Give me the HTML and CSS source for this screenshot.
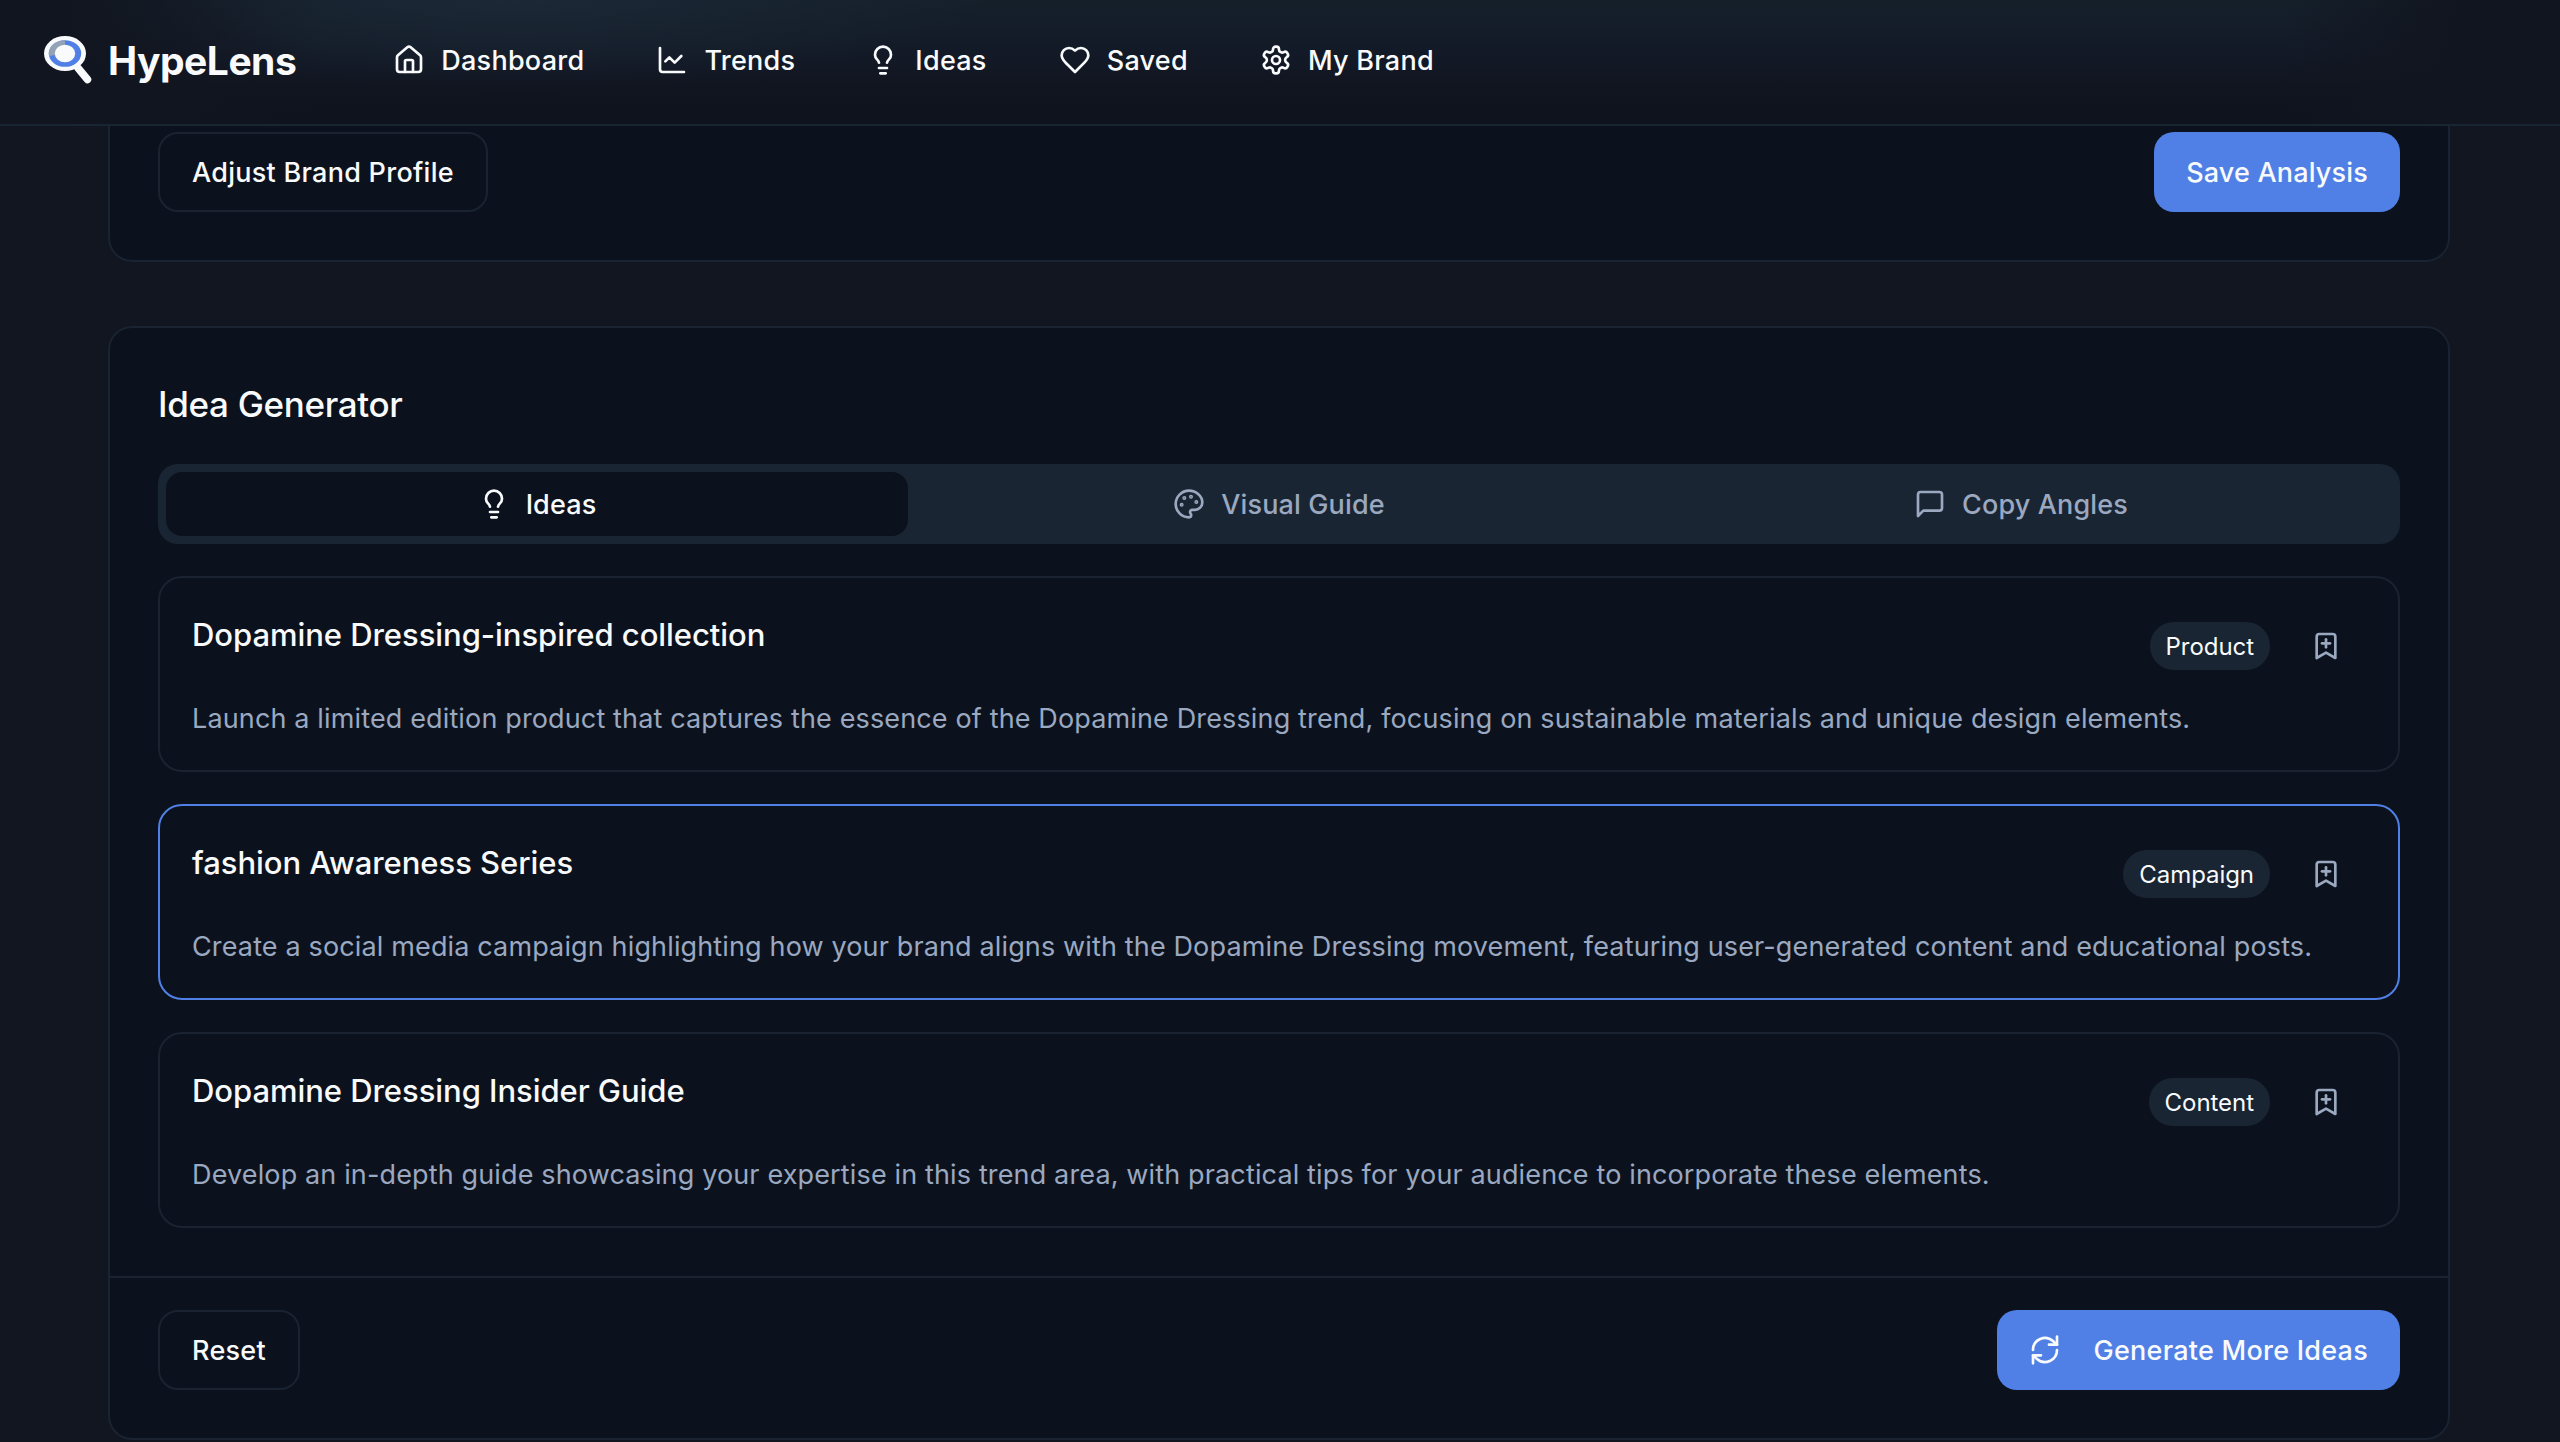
FILE: index.html
```html
<!DOCTYPE html>
<html lang="en">
<head>
    <meta charset="utf-8">
    <title>HypeLens</title>
    <meta name="viewport" content="width=device-width, initial-scale=1">
    <link rel="stylesheet" href="styles.css">
</head>

<body>
    <!-- icons -->
    <svg width="0" height="0" class="sprite">
        <symbol id="bulb" viewBox="0 0 24 24"><path d="M15 14c.2-1 .7-1.7 1.5-2.5 1-.9 1.5-2.2 1.5-3.5A6 6 0 0 0 6 8c0 1 .2 2.2 1.5 3.5.7.7 1.3 1.5 1.5 2.5"/><path d="M9 18h6"/><path d="M10 22h4"/></symbol>
        <symbol id="bookmark" viewBox="0 0 24 24"><path d="m19 21-7-4-7 4V5a2 2 0 0 1 2-2h10a2 2 0 0 1 2 2v16Z"/><path d="M12 7v6"/><path d="M15 10H9"/></symbol>
    </svg>

    <header class="navbar">
        <a class="logo" href="#">
            <svg class="logo-mark" viewBox="0 0 48 48">
                <path d="M34 32l9.500 11.500" stroke="#f8fafc" stroke-width="7.500" stroke-linecap="round"/>
                <ellipse cx="21" cy="17.500" rx="21" ry="17.500" fill="#f8fafc"/>
                <ellipse cx="21" cy="17.500" rx="16.200" ry="13.300" fill="#5080e6"/>
                <path d="M21 4.200A16.200 13.300 0 0 0 5 20L21 17.500z" fill="#94a3b3"/>
                <ellipse cx="21" cy="17.500" rx="10.200" ry="8.800" fill="#f8fafc"/>
            </svg>
            <span>HypeLens</span>
        </a>
        <nav>
            <a href="#"><svg class="icon" viewBox="0 0 24 24"><path d="M15 21v-8a1 1 0 0 0-1-1h-4a1 1 0 0 0-1 1v8"/><path d="M3 10a2 2 0 0 1 .709-1.528l7-5.999a2 2 0 0 1 2.582 0l7 5.999A2 2 0 0 1 21 10v9a2 2 0 0 1-2 2H5a2 2 0 0 1-2-2z"/></svg>Dashboard</a>
            <a href="#"><svg class="icon" viewBox="0 0 24 24"><path d="M3 3v16a2 2 0 0 0 2 2h16"/><path d="m19 9-5 5-4-4-3 3"/></svg>Trends</a>
            <a href="#"><svg class="icon"><use href="#bulb"/></svg>Ideas</a>
            <a href="#"><svg class="icon" viewBox="0 0 24 24"><path d="M19 14c1.490-1.460 3-3.210 3-5.500A5.500 5.500 0 0 0 16.500 3c-1.760 0-3 .5-4.500 2-1.500-1.500-2.740-2-4.500-2A5.500 5.500 0 0 0 2 8.500c0 2.300 1.500 4.050 3 5.500l7 7Z"/></svg>Saved</a>
            <a href="#"><svg class="icon" viewBox="0 0 24 24"><path d="M12.220 2h-.44a2 2 0 0 0-2 2v.18a2 2 0 0 1-1 1.730l-.43.25a2 2 0 0 1-2 0l-.15-.08a2 2 0 0 0-2.730.73l-.22.38a2 2 0 0 0 .73 2.730l.15.1a2 2 0 0 1 1 1.720v.51a2 2 0 0 1-1 1.740l-.15.09a2 2 0 0 0-.73 2.730l.22.38a2 2 0 0 0 2.730.73l.15-.08a2 2 0 0 1 2 0l.43.25a2 2 0 0 1 1 1.730V20a2 2 0 0 0 2 2h.44a2 2 0 0 0 2-2v-.18a2 2 0 0 1 1-1.730l.43-.25a2 2 0 0 1 2 0l.15.08a2 2 0 0 0 2.730-.73l.22-.39a2 2 0 0 0-.73-2.730l-.15-.08a2 2 0 0 1-1-1.740v-.5a2 2 0 0 1 1-1.740l.15-.09a2 2 0 0 0 .73-2.730l-.22-.38a2 2 0 0 0-2.730-.73l-.15.08a2 2 0 0 1-2 0l-.43-.25a2 2 0 0 1-1-1.730V4a2 2 0 0 0-2-2z"/><circle cx="12" cy="12" r="3"/></svg>My Brand</a>
        </nav>
    </header>

    <main>
        <section class="card analysis">
            <div class="card-footer">
                <button class="btn">Adjust Brand Profile</button>
                <button class="btn primary">Save Analysis</button>
            </div>
        </section>

        <section class="card generator">
            <h2>Idea Generator</h2>

            <div class="tabs">
                <button class="tab active"><svg class="icon"><use href="#bulb"/></svg>Ideas</button>
                <button class="tab"><svg class="icon" viewBox="0 0 24 24"><circle class="dot" cx="13.500" cy="6.500" r=".5"/><circle class="dot" cx="17.500" cy="10.500" r=".5"/><circle class="dot" cx="8.500" cy="7.500" r=".5"/><circle class="dot" cx="6.500" cy="12.500" r=".5"/><path d="M12 2C6.500 2 2 6.500 2 12s4.500 10 10 10c.926 0 1.648-.746 1.648-1.688 0-.437-.18-.835-.437-1.125-.29-.289-.438-.652-.438-1.125a1.640 1.640 0 0 1 1.668-1.668h1.996c3.051 0 5.555-2.503 5.555-5.554C21.965 6.012 17.461 2 12 2z"/></svg>Visual Guide</button>
                <button class="tab"><svg class="icon" viewBox="0 0 24 24"><path d="M21 15a2 2 0 0 1-2 2H7l-4 4V5a2 2 0 0 1 2-2h14a2 2 0 0 1 2 2z"/></svg>Copy Angles</button>
            </div>

            <div class="ideas">
                <article class="idea">
                    <div class="idea-head">
                        <h3>Dopamine Dressing-inspired collection</h3>
                        <span class="badge">Product</span>
                        <button class="save"><svg class="icon"><use href="#bookmark"/></svg></button>
                    </div>
                    <p>Launch a limited edition product that captures the essence of the Dopamine Dressing trend, focusing on sustainable materials and unique design elements.</p>
                </article>
                <article class="idea selected">
                    <div class="idea-head">
                        <h3>fashion Awareness Series</h3>
                        <span class="badge">Campaign</span>
                        <button class="save"><svg class="icon"><use href="#bookmark"/></svg></button>
                    </div>
                    <p>Create a social media campaign highlighting how your brand aligns with the Dopamine Dressing movement, featuring user-generated content and educational posts.</p>
                </article>
                <article class="idea">
                    <div class="idea-head">
                        <h3>Dopamine Dressing Insider Guide</h3>
                        <span class="badge">Content</span>
                        <button class="save"><svg class="icon"><use href="#bookmark"/></svg></button>
                    </div>
                    <p>Develop an in-depth guide showcasing your expertise in this trend area, with practical tips for your audience to incorporate these elements.</p>
                </article>
            </div>

            <div class="card-footer bordered">
                <button class="btn">Reset</button>
                <button class="btn primary with-icon"><svg class="icon" viewBox="0 0 24 24"><path d="M21 2v6h-6"/><path d="M3 12a9 9 0 0 1 15-6.700L21 8"/><path d="M3 22v-6h6"/><path d="M21 12a9 9 0 0 1-15 6.700L3 16"/></svg>Generate More Ideas</button>
            </div>
        </section>
    </main>
</body>
</html>
```

FILE: styles.css
```css
* {
    box-sizing: border-box;
}

body {
    margin: 0;
    height: 1442px;
    overflow: hidden;
    background: #121620;
    color: #f8fafc;
    font-family: Inter, sans-serif;
    font-size: 27px;
    line-height: 40px;
    letter-spacing: 0.14px;
}

h2, h3, p {
    margin: 0;
}

button {
    font: inherit;
    letter-spacing: inherit;
    color: inherit;
    background: none;
    border: 0;
    padding: 0;
}

a {
    color: inherit;
    text-decoration: none;
}

.sprite {
    position: absolute;
}

.icon {
    width: 32px;
    height: 32px;
    flex: none;
    fill: none;
    stroke: currentColor;
    stroke-width: 2;
    stroke-linecap: round;
    stroke-linejoin: round;
}

.dot {
    fill: currentColor;
}

/* top bar */
.navbar {
    height: 126px;
    padding: 0 44px 4px;
    display: flex;
    align-items: center;
    border-bottom: 2px solid #1a2533;
    background:
        linear-gradient(90deg, #11151f 60px, rgba(17, 21, 31, 0) 320px, rgba(17, 21, 31, 0) 2280px, #11151f 2460px),
        radial-gradient(ellipse 460px 90px at 520px 0, rgba(30, 43, 58, .7), rgba(30, 43, 58, 0)),
        linear-gradient(#15202b, #131a27 40%, #10141f 75%, #0f131d);
}

.logo {
    display: flex;
    align-items: center;
    gap: 16px;
    font-size: 39px;
    font-weight: 700;
    letter-spacing: -0.5px;
}

.logo span {
    padding-top: 2px;
}

.logo-mark {
    width: 48px;
    height: 48px;
}

nav {
    display: flex;
    gap: 72px;
    margin-left: 97px;
    font-weight: 500;
    letter-spacing: 0.26px;
}

nav a {
    display: flex;
    align-items: center;
    gap: 16px;
    padding-top: 2px;
}

nav .icon, .tab .icon, .btn .icon {
    margin-top: -2px;
}

/* cards */
.card {
    width: 2342px;
    margin-left: 108px;
    background: #0c121d;
    border: 2px solid #192331;
    border-radius: 24px;
}

.analysis {
    border-top: 0;
    border-radius: 0 0 24px 24px;
    padding-top: 6px;
    margin-bottom: 64px;
}

.card-footer {
    display: flex;
    justify-content: space-between;
    padding: 0 48px 48px;
}

.card-footer.bordered {
    border-top: 2px solid #192331;
    padding-top: 32px;
}

.btn {
    height: 80px;
    padding: 2px 32px 0;
    border: 2px solid #192331;
    border-radius: 20px;
    font-weight: 500;
    letter-spacing: 0.27px;
}

.btn.primary {
    background: #5080e6;
    border: 0;
    letter-spacing: 0.18px;
}

.btn.with-icon {
    display: flex;
    align-items: center;
    gap: 32px;
    letter-spacing: 0.25px;
}

.generator h2 {
    padding: 52px 48px 0;
    font-size: 35px;
    line-height: 48px;
    font-weight: 500;
    letter-spacing: -0.33px;
}

/* tabs */
.tabs {
    display: grid;
    grid-template-columns: repeat(3, 1fr);
    margin: 36px 48px 32px;
    padding: 8px;
    height: 80px;
    background: #1a2533;
    border-radius: 20px;
    color: #9aa8c0;
}

.tab {
    display: flex;
    align-items: center;
    justify-content: center;
    gap: 16px;
    padding-top: 2px;
    border-radius: 16px;
    font-weight: 500;
}

.tab.active {
    background: #0c121d;
    color: #f8fafc;
}

/* idea list */
.ideas {
    display: grid;
    gap: 32px;
    padding: 0 48px 48px;
}

.idea {
    height: 196px;
    min-width: 0;
    padding: 28px 32px;
    border: 2px solid #192331;
    border-radius: 24px;
}

.idea.selected {
    border-color: #5080e6;
}

.idea-head {
    display: flex;
    align-items: center;
    gap: 16px;
}

.idea-head h3 {
    flex: 1;
    align-self: flex-start;
    padding-top: 9px;
    font-size: 31px;
    font-weight: 500;
    letter-spacing: -0.05px;
}

.badge {
    height: 48px;
    padding: 0 16px;
    border-radius: 24px;
    background: #1a2533;
    font-size: 24px;
    line-height: 50px;
    letter-spacing: -0.05px;
}

.save {
    width: 80px;
    height: 80px;
    display: flex;
    align-items: center;
    justify-content: center;
    color: #9aa8c0;
}

.idea p {
    margin-top: 13px;
    color: #9aa8c0;
    white-space: nowrap;
}
```
